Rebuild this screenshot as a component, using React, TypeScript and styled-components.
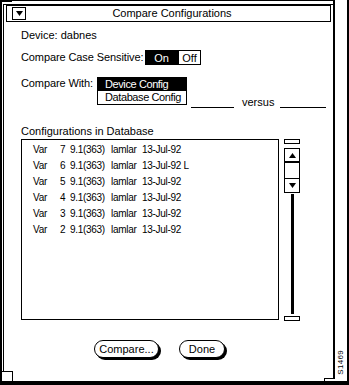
import styled, { createGlobalStyle } from 'styled-components';

const GlobalStyle = createGlobalStyle`
  html, body {
    margin: 0;
    padding: 0;
    background: #fff;
  }
  body {
    font-family: 'Liberation Sans', Arial, sans-serif;
    font-size: 11px;
    color: #000;
  }
`;

const Screen = styled.div`
  display: flex;
  width: 349px;
  height: 385px;
  box-sizing: border-box;
  border-bottom: 4px solid #000;
  background: #fff;
`;

const Window = styled.div`
  position: relative;
  display: flex;
  width: 335px;
  box-sizing: border-box;
  border-left: 2px solid #000;
  border-top: 1px solid #000;
  border-right: 2px solid #000;
  padding: 3px 0 0 1px;
`;

const Inner = styled.div`
  flex: 1;
  display: flex;
  flex-direction: column;
  border-left: 1px solid #000;
  border-top: 1px solid #000;
`;

const CornerTopLeft = styled.span`
  position: absolute;
  left: -2px;
  top: -1px;
  width: 12px;
  height: 2px;
  background: #000;
`;

const CornerBottom = styled.span<{ $side: 'left' | 'right' }>`
  position: absolute;
  bottom: 0;
  ${(p) => (p.$side === 'left' ? 'left: 0;' : 'right: -2px;')}
  width: 10px;
  height: ${(p) => (p.$side === 'left' ? '9px' : '2px')};
  background: #fff;
  border-top: 1px solid #000;
  ${(p) => (p.$side === 'left' ? 'border-right: 1px solid #000;' : 'border-left: 1px solid #000;')}
`;

const TitleBar = styled.div`
  display: flex;
  align-items: center;
  height: 17px;
  margin: 0 2px 0 2px;
  box-sizing: border-box;
  border: 1px solid #000;
`;

const MenuButton = styled.div`
  display: flex;
  align-items: center;
  justify-content: center;
  width: 14px;
  height: 13px;
  margin-left: 5px;
  box-sizing: border-box;
  border: 1px solid #000;
`;

const Title = styled.div`
  flex: 1;
  text-align: center;
  margin-right: 12px;
  line-height: 13px;
`;

const Body = styled.div`
  display: flex;
  flex-direction: column;
  padding-left: 17px;
`;

const Line = styled.div<{ $top: number }>`
  margin-top: ${(p) => p.$top}px;
  line-height: 14px;
  white-space: nowrap;
`;

const Row = styled.div<{ $top: number }>`
  display: flex;
  align-items: flex-start;
  margin-top: ${(p) => p.$top}px;
`;

const Label = styled.span<{ $w: number; $h: number }>`
  flex: none;
  width: ${(p) => p.$w}px;
  line-height: ${(p) => p.$h}px;
  white-space: nowrap;
  letter-spacing: -0.1px;
`;

const Toggle = styled.div`
  display: flex;
  height: 15px;
`;

const ToggleItem = styled.span<{ $on?: boolean; $w: number }>`
  display: flex;
  align-items: center;
  justify-content: center;
  width: ${(p) => p.$w}px;
  box-sizing: border-box;
  border: 1px solid #000;
  background: ${(p) => (p.$on ? '#000' : '#fff')};
  color: ${(p) => (p.$on ? '#fff' : '#000')};
`;

const Dropdown = styled.div`
  flex: none;
  display: flex;
  flex-direction: column;
  width: 90px;
  border: 1px solid #000;
  box-sizing: border-box;
`;

const Option = styled.div<{ $selected?: boolean }>`
  height: 13px;
  line-height: 13px;
  padding-left: 7px;
  white-space: nowrap;
  letter-spacing: -0.4px;
  background: ${(p) => (p.$selected ? '#000' : '#fff')};
  color: ${(p) => (p.$selected ? '#fff' : '#000')};
`;

const Versus = styled.div`
  display: flex;
  align-items: flex-end;
  height: 12px;
  margin-top: 19px;
`;

const Blank = styled.span<{ $w: number; $left: number }>`
  flex: none;
  width: ${(p) => p.$w}px;
  height: 11px;
  margin-left: ${(p) => p.$left}px;
  border-bottom: 1px solid #000;
`;

const VersusText = styled.span`
  margin-left: 8px;
  line-height: 12px;
`;

const ListArea = styled.div`
  display: flex;
  margin-top: 1px;
`;

const ListBox = styled.div`
  width: 258px;
  height: 181px;
  box-sizing: border-box;
  border: 1px solid #000;
  padding: 2px 0 0 11px;
`;

const ListRow = styled.div`
  display: grid;
  grid-template-columns: 27px 10px 41px 31px auto;
  font-size: 10px;
  line-height: 16px;
  white-space: nowrap;
  letter-spacing: -0.3px;
`;

const ScrollBar = styled.div`
  display: flex;
  flex-direction: column;
  align-items: center;
  width: 16px;
  margin-left: 5px;
`;

const Cap = styled.div`
  width: 16px;
  height: 5px;
  box-sizing: border-box;
  border: 1px solid #000;
`;

const Stepper = styled.div`
  display: flex;
  flex-direction: column;
  width: 16px;
  margin-top: 4px;
  box-sizing: border-box;
  border: 1px solid #000;
`;

const StepCell = styled.div<{ $h: number; $bottom?: number }>`
  display: flex;
  align-items: center;
  justify-content: center;
  height: ${(p) => p.$h}px;
  border-bottom: ${(p) => p.$bottom ?? 0}px solid #000;
`;

const Track = styled.div`
  width: 3px;
  height: 120px;
  margin: 1px 0 2px;
  background: #000;
`;

const Buttons = styled.div`
  display: flex;
  gap: 20px;
  margin: 19px 0 0 73px;
`;

const PillButton = styled.button<{ $w: number }>`
  width: ${(p) => p.$w}px;
  height: 18px;
  padding: 0;
  border: 1px solid #000;
  border-radius: 9px;
  background: #fff;
  box-shadow: 2px 2px 0 #000;
  font: inherit;
  color: #000;
  line-height: 16px;
  white-space: nowrap;
`;

const Strip = styled.div`
  display: flex;
  flex-direction: column;
  justify-content: flex-end;
  align-items: center;
  width: 14px;
  box-sizing: border-box;
  border-right: 2px solid #000;
  padding-bottom: 6px;
`;

const FigureId = styled.span`
  writing-mode: vertical-rl;
  transform: rotate(180deg);
  font-size: 8px;
  line-height: 8px;
  letter-spacing: 0.3px;
`;

const Arrow = ({ up }: { up?: boolean }) => (
  <svg width="7" height="5" viewBox="0 0 7 5">
    <polygon points={up ? '3.5,0 7,5 0,5' : '0,0 7,0 3.5,5'} fill="#000" />
  </svg>
);

const configs = [
  { ver: 7, date: '13-Jul-92' },
  { ver: 6, date: '13-Jul-92 L' },
  { ver: 5, date: '13-Jul-92' },
  { ver: 4, date: '13-Jul-92' },
  { ver: 3, date: '13-Jul-92' },
  { ver: 2, date: '13-Jul-92' },
];

export default function App() {
  return (
    <>
      <GlobalStyle />
      <Screen>
        <Window>
          <CornerTopLeft />
          <Inner>
            <TitleBar>
              <MenuButton>
                <Arrow />
              </MenuButton>
              <Title>Compare Configurations</Title>
            </TitleBar>
            <Body>
              <Line $top={6}>Device: dabnes</Line>
              <Row $top={8}>
                <Label $w={124} $h={15}>Compare Case Sensitive:</Label>
                <Toggle>
                  <ToggleItem $on $w={33}>On</ToggleItem>
                  <ToggleItem $w={23}>Off</ToggleItem>
                </Toggle>
              </Row>
              <Row $top={12}>
                <Label $w={76} $h={13}>Compare With:</Label>
                <Dropdown>
                  <Option $selected>Device Config</Option>
                  <Option>Database Config</Option>
                </Dropdown>
                <Versus>
                  <Blank $w={43} $left={4} />
                  <VersusText>versus</VersusText>
                  <Blank $w={46} $left={6} />
                </Versus>
              </Row>
              <Line $top={16}>Configurations in Database</Line>
              <ListArea>
                <ListBox>
                  {configs.map((c) => (
                    <ListRow key={c.ver}>
                      <span>Var</span>
                      <span>{c.ver}</span>
                      <span>9.1(363)</span>
                      <span>lamlar</span>
                      <span>{c.date}</span>
                    </ListRow>
                  ))}
                </ListBox>
                <ScrollBar>
                  <Cap />
                  <Stepper>
                    <StepCell $h={12} $bottom={2}>
                      <Arrow up />
                    </StepCell>
                    <StepCell $h={15} $bottom={1} />
                    <StepCell $h={13}>
                      <Arrow />
                    </StepCell>
                  </Stepper>
                  <Track />
                  <Cap />
                </ScrollBar>
              </ListArea>
              <Buttons>
                <PillButton $w={65}>Compare...</PillButton>
                <PillButton $w={46}>Done</PillButton>
              </Buttons>
            </Body>
          </Inner>
          <CornerBottom $side="left" />
          <CornerBottom $side="right" />
        </Window>
        <Strip>
          <FigureId>S1469</FigureId>
        </Strip>
      </Screen>
    </>
  );
}
